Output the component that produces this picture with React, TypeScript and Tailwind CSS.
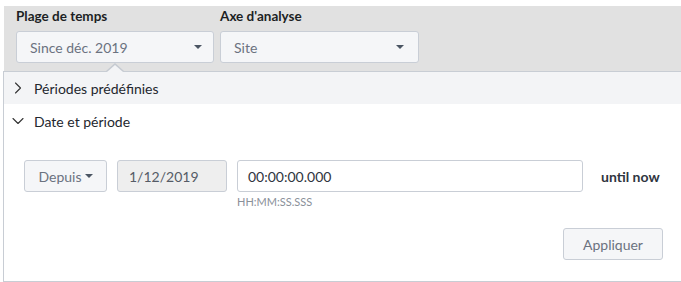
import { ChevronRight, ChevronDown } from 'lucide-react';

function Caret({ className = '' }: { className?: string }) {
  return (
    <span
      className={`inline-block h-0 w-0 border-x-[4px] border-t-[4px] border-x-transparent border-t-[#4b5563] ${className}`}
    />
  );
}

export default function App() {
  return (
    <div className="relative h-[282px] w-[681px] overflow-hidden bg-white pt-[6px] pl-[4px] font-['Lato','Open_Sans',sans-serif] text-[14px] text-[#2f3540]">
      {/* filtres */}
      <div className="relative flex h-[65px] gap-[6px] bg-[#e1e1e1] pl-[12px]">
        <div className="flex flex-col">
          <label className="leading-[20px] text-[13.5px] font-bold text-[#1c1f24]">Plage de temps</label>
          <button className="mt-[5px] flex h-[32px] w-[198px] items-center justify-between rounded-[3px] border border-[#c9ced6] bg-[#f5f6f8] pl-[13px] pr-[11px] text-[#6b7280]">
            <span>Since déc. 2019</span>
            <Caret />
          </button>
        </div>
        <div className="flex flex-col">
          <label className="leading-[20px] text-[13.5px] font-bold text-[#1c1f24]">Axe d'analyse</label>
          <button className="mt-[5px] flex h-[32px] w-[199px] items-center justify-between rounded-[3px] border border-[#c9ced6] bg-[#f5f6f8] pl-[13px] pr-[14px] text-[#6b7280]">
            <span>Site</span>
            <Caret />
          </button>
        </div>
        {/* pointeur du popover */}
        <span className="absolute bottom-0 left-[102px] h-0 w-0 border-x-[9px] border-b-[8px] border-x-transparent border-b-[#c5cad1]" />
        <span className="absolute bottom-[-1px] left-[103px] h-0 w-0 border-x-[8px] border-b-[7px] border-x-transparent border-b-[#f3f4f6]" />
      </div>

      {/* popover */}
      <div className="-ml-[1px] h-[211px] w-[700px] border border-[#c8cdd4] bg-white">
        <div className="flex h-[32px] items-center gap-[6px] bg-[#f3f4f6] pl-[4px] text-[#23272e]">
          <ChevronRight size={20} strokeWidth={1.3} className="text-[#333]" />
          <span>Périodes prédéfinies</span>
        </div>
        <div className="flex h-[34px] items-center gap-[6px] pl-[4px] text-[#23272e]">
          <ChevronDown size={20} strokeWidth={1.3} className="text-[#333]" />
          <span>Date et période</span>
        </div>

        <div className="mt-[22px] flex items-start pl-[20px]">
          <button className="flex h-[32px] w-[83px] items-center justify-center gap-[3px] rounded-[3px] border border-[#c9ced6] bg-[#f5f6f8] text-[#6b7280]">
            <span>Depuis</span>
            <Caret />
          </button>
          <div className="ml-[10px] flex h-[32px] w-[110px] items-center rounded-[3px] border border-[#c9ced6] bg-[#eeeeee] pl-[11px] text-[#555b66]">
            1/12/2019
          </div>
          <div className="ml-[10px] flex flex-col">
            <div className="flex h-[32px] w-[346px] items-center rounded-[3px] border border-[#c9ced6] bg-white pl-[10px] text-[#2f3540]">
              00:00:00.000
            </div>
            <span className="mt-[3px] text-[11px] leading-[14px] text-[#8a9099]">HH:MM:SS.SSS</span>
          </div>
          <span className="ml-[18px] flex h-[32px] items-center font-bold text-[#2f3540]">until now</span>
        </div>

        <div className="mt-[19px] flex w-[681px] justify-end pr-[22px]">
          <button className="flex h-[32px] w-[100px] items-center justify-center rounded-[3px] border border-[#c9ced6] bg-[#f5f6f8] text-[#6b7280]">
            Appliquer
          </button>
        </div>
      </div>
    </div>
  );
}
